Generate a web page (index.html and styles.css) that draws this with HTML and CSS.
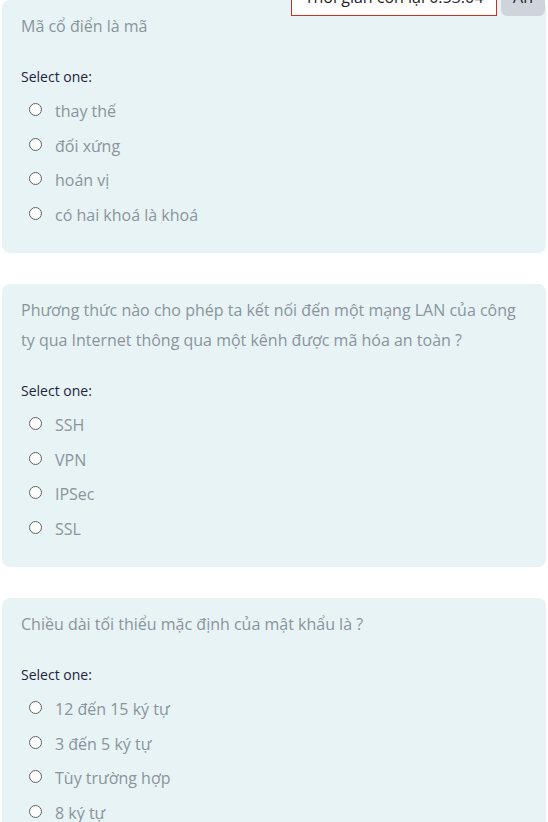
FILE: index.html
```html
<!DOCTYPE html>
<html lang="vi">
<head>
<meta charset="utf-8">
<link rel="stylesheet" href="styles.css">
</head>
<body>
<div class="timer-bar">
  <div class="timer">Thời gian còn lại 0:53:04</div>
  <button class="hide-btn">Ẩn</button>
</div>
<main class="quiz">
  <section class="card first">
    <p class="qtext">Mã cổ điển là mã</p>
    <p class="prompt">Select one:</p>
    <div class="answers">
      <label class="opt"><span class="radio"></span><span>thay thế</span></label>
      <label class="opt"><span class="radio"></span><span>đối xứng</span></label>
      <label class="opt"><span class="radio"></span><span>hoán vị</span></label>
      <label class="opt"><span class="radio"></span><span>có hai khoá là khoá</span></label>
    </div>
  </section>
  <section class="card">
    <p class="qtext">Phương thức nào cho phép ta kết nối đến một mạng LAN của công ty qua Internet thông qua một kênh được mã hóa an toàn ?</p>
    <p class="prompt">Select one:</p>
    <div class="answers">
      <label class="opt"><span class="radio"></span><span>SSH</span></label>
      <label class="opt"><span class="radio"></span><span>VPN</span></label>
      <label class="opt"><span class="radio"></span><span>IPSec</span></label>
      <label class="opt"><span class="radio"></span><span>SSL</span></label>
    </div>
  </section>
  <section class="card">
    <p class="qtext">Chiều dài tối thiểu mặc định của mật khẩu là ?</p>
    <p class="prompt">Select one:</p>
    <div class="answers">
      <label class="opt"><span class="radio"></span><span>12 đến 15 ký tự</span></label>
      <label class="opt"><span class="radio"></span><span>3 đến 5 ký tự</span></label>
      <label class="opt"><span class="radio"></span><span>Tùy trường hợp</span></label>
      <label class="opt"><span class="radio"></span><span>8 ký tự</span></label>
    </div>
  </section>
</main>
</body>
</html>
```
FILE: styles.css
```css
html, body {
  margin: 0;
  padding: 0;
  background: #ffffff;
  font-family: "Open Sans", Lato, sans-serif;
}
.quiz {
  display: flex;
  flex-direction: column;
  gap: 31px;
  padding: 0 2px 0 2px;
}
.card {
  background: #e7f3f5;
  border-radius: 8px;
  padding: 11px 19px 21px 19px;
}
.qtext {
  margin: 0;
  font-size: 16px;
  line-height: 30px;
  color: #8b949c;
}
.prompt {
  margin: 25px 0 7px 0;
  font-size: 14px;
  line-height: 21px;
  color: #1d2340;
}
.answers {
  display: flex;
  flex-direction: column;
  padding-left: 8px;
}
.opt {
  display: flex;
  align-items: center;
  height: 34.5px;
  font-size: 16px;
  color: #8b949c;
}
.radio {
  box-sizing: border-box;
  width: 13px;
  height: 13px;
  border: 1.5px solid #5f6368;
  border-radius: 50%;
  background: #fff;
  margin-right: 13px;
  margin-top: -3px;
}
.timer-bar {
  position: absolute;
  top: -22px;
  left: 291px;
  display: flex;
  gap: 4px;
  align-items: flex-end;
  z-index: 2;
}
.timer {
  box-sizing: border-box;
  width: 206px;
  height: 38px;
  border: 1px solid #ca3120;
  background: #fff;
  color: #1d2125;
  font-size: 16px;
  display: flex;
  align-items: center;
  justify-content: center;
}
.hide-btn {
  box-sizing: border-box;
  width: 44px;
  height: 38px;
  border: none;
  border-radius: 6px;
  background: #ced4da;
  color: #1d2125;
  font-family: inherit;
  font-size: 16px;
  padding: 0;
}
```
